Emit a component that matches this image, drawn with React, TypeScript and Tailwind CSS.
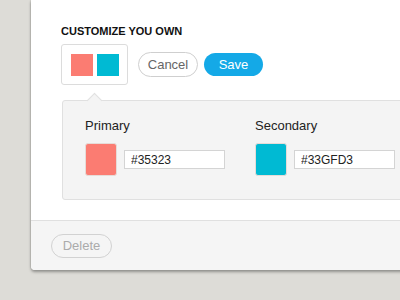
import { useState } from 'react';

const font = { fontFamily: '"Liberation Sans", Arial, sans-serif' };

function ColorField({ label, color, value }: { label: string; color: string; value: string }) {
  const [hex, setHex] = useState(value);
  return (
    <div className="flex flex-col">
      <div className="text-[13px] leading-4 text-[#222]">{label}</div>
      <div className="mt-[9px] flex items-center gap-[7px]">
        <div
          className="h-[33px] w-[32px] rounded-[3px] border border-[#e6dcd8]"
          style={{ backgroundColor: color }}
        />
        <input
          value={hex}
          onChange={(e) => setHex(e.target.value)}
          className="h-[19px] w-[101px] border border-[#d4d4d4] bg-white px-[6px] text-[12px] text-[#222] outline-none"
        />
      </div>
    </div>
  );
}

export default function App() {
  return (
    <div className="h-[300px] w-[400px] overflow-hidden bg-[#dddcd7]" style={font}>
      <div className="ml-[31px] w-[420px] rounded-b-[4px] bg-white shadow-[0_2px_3px_rgba(0,0,0,0.35),-1px_0_1px_rgba(0,0,0,0.08)]">
        <div className="pl-[30px] pt-[23px]">
          <h2 className="text-[11px] font-bold leading-4 text-[#111]">CUSTOMIZE YOU OWN</h2>

          {/* swatch preview + actions */}
          <div className="mt-[5px] flex items-center">
            <div className="flex h-[41px] w-[67px] items-center justify-center gap-[4px] rounded-[3px] border border-[#dcdcdc] bg-white">
              <div className="h-[22px] w-[22px] bg-[#fb7c72]" />
              <div className="h-[22px] w-[22px] bg-[#00bad3]" />
            </div>
            <button className="ml-[10px] h-[25px] w-[60px] rounded-full border border-[#cfcfcf] bg-white text-[13px] text-[#666]">
              Cancel
            </button>
            <button className="ml-[6px] h-[23px] w-[59px] rounded-full bg-[#14a9e7] text-[13px] text-white">
              Save
            </button>
          </div>

          {/* popover */}
          <div className="relative ml-px mt-[15px] rounded-[3px] border border-[#e0e0e0] bg-[#f4f4f4] pb-[23px] pl-[22px] pt-[17px]">
            <div className="absolute left-[26px] top-[-6px] h-[11px] w-[11px] rotate-45 border-l border-t border-[#e0e0e0] bg-[#f4f4f4]" />
            <div className="flex gap-[30px]">
              <ColorField label="Primary" color="#fb7c72" value="#35323" />
              <ColorField label="Secondary" color="#00bad3" value="#33GFD3" />
            </div>
          </div>
        </div>

        <div className="mt-[20px] h-[50px] rounded-b-[4px] border-t border-[#e0e0e0] bg-[#f5f5f5] pl-[20px] pt-[12px]">
          <button className="h-[24px] w-[61px] rounded-full border border-[#d2d2d2] text-[13px] text-[#ababab]">
            Delete
          </button>
        </div>
      </div>
    </div>
  );
}
